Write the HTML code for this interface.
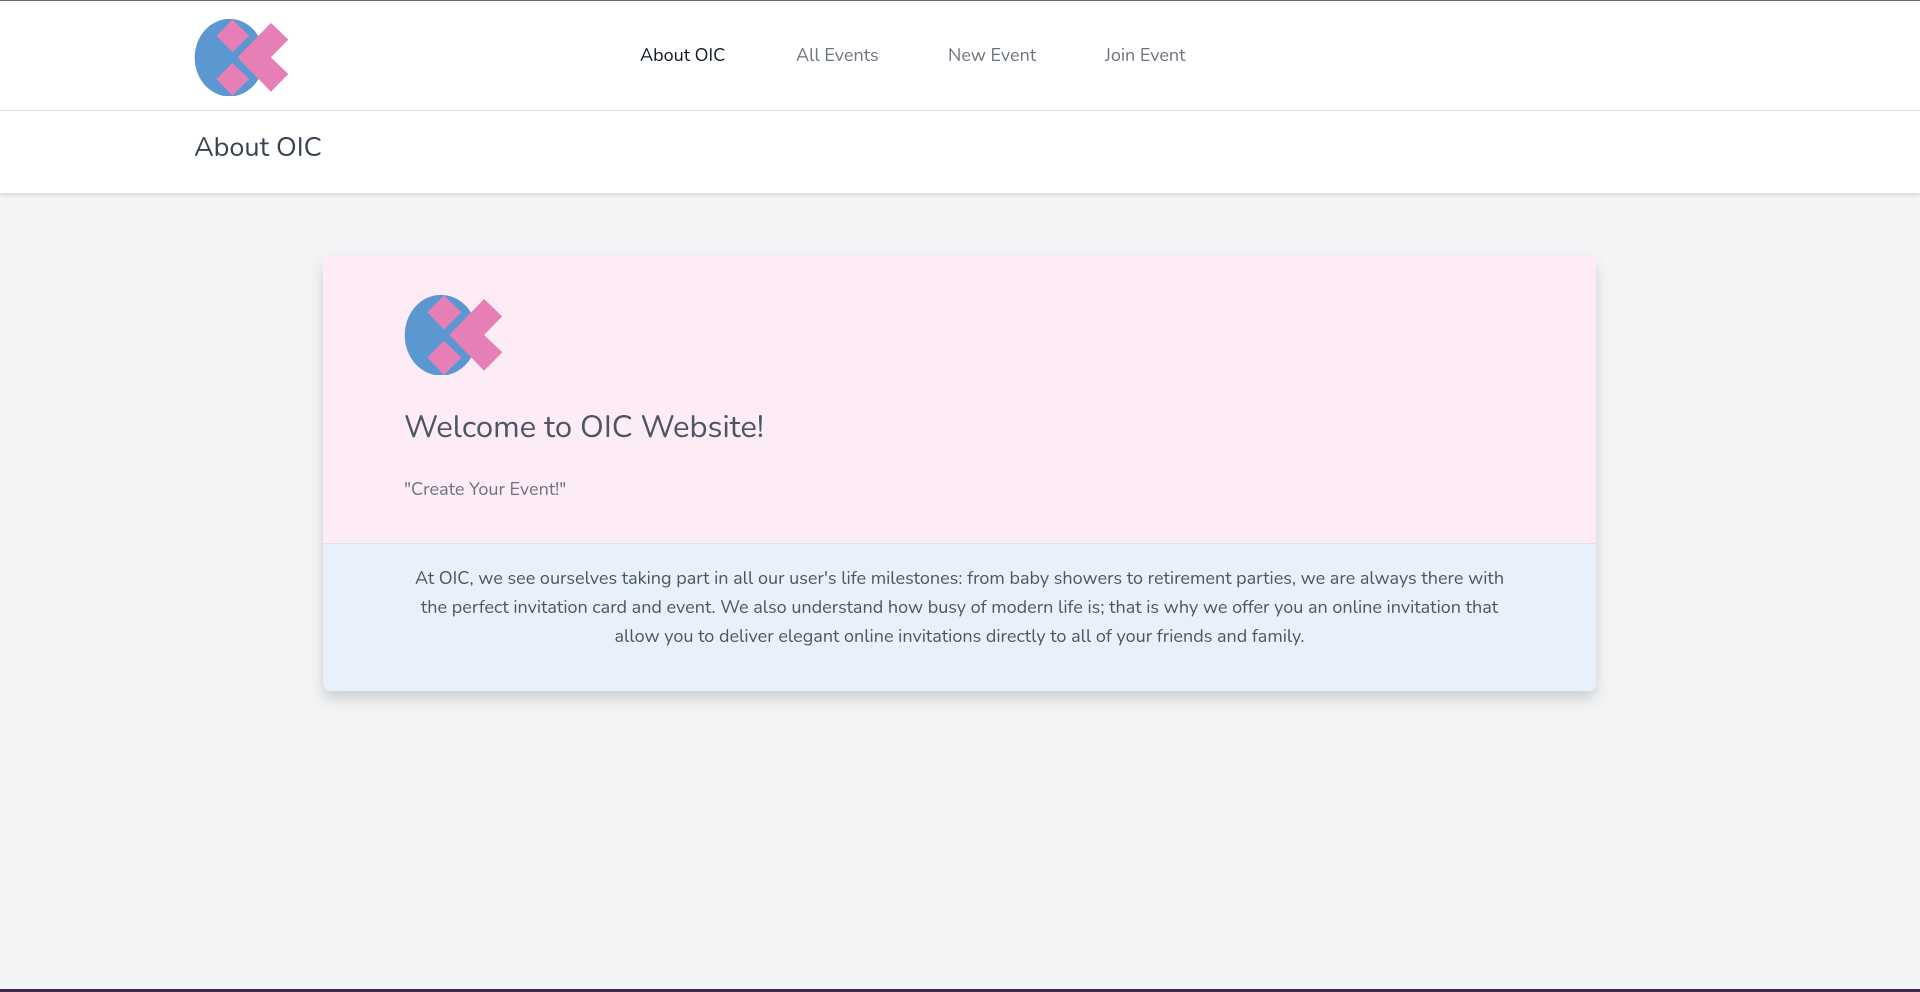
<!DOCTYPE html>
<html><head><meta charset="utf-8"><style>
*{margin:0;padding:0;box-sizing:border-box}
body{width:1920px;height:992px;background:#f3f4f6;font-family:"Nunito","Liberation Sans",sans-serif;position:relative;overflow:hidden}
.top{position:absolute;left:0;top:0;width:1920px;height:111px;background:#fff;border-top:1px solid #6b6b6b;border-bottom:1px solid #e5e7eb}
.sub{position:absolute;left:0;top:111px;width:1920px;height:82px;background:#fff;box-shadow:0 2px 4px rgba(0,0,0,.12)}
.sub h2{position:absolute;left:194px;top:18px;font-size:27px;font-weight:400;color:#374151}
.nav a{position:absolute;top:43px;font-size:18px;color:#6b7280;text-decoration:none}
.card{position:absolute;left:323px;top:255px;width:1273px;height:436px;border-radius:8px;overflow:hidden;box-shadow:0 8px 14px rgba(0,0,0,.15)}
.pink{height:289px;background:#fdebf6;border-bottom:1px solid #dbe3ee;position:relative}
.blue{height:147px;background:#e8f1fb;text-align:center;padding:0 90px;padding-top:21px;font-size:18px;line-height:29px;color:#4b5563}
.pink h1{position:absolute;left:81px;top:151px;font-size:31px;font-weight:400;color:#4b5563}
.pink p{position:absolute;left:81px;top:223px;font-size:18px;color:#6b7280}
.bot{position:absolute;left:0;top:989px;width:1920px;height:3px;background:#3b2559}
</style></head><body>
<svg width="0" height="0" style="position:absolute"><defs><g id="logo">
<ellipse cx="146" cy="166" rx="104" ry="116" fill="#5b97d1"/>
<polygon points="155,52 205,100 155,150 107,100" fill="#e77fb7"/>
<polygon points="155,182 205,230 155,280 107,230" fill="#e77fb7"/>
<polygon points="170,165 270,62 322,112 270,165 322,215 270,268" fill="#e77fb7"/>
</g></defs></svg>
<div class="top">
<svg style="position:absolute;left:194px;top:16px" width="97" height="79" viewBox="40 45 290 235"><use href="#logo"/></svg>
<div class="nav">
<a style="left:640px;color:#111827">About OIC</a>
<a style="left:796px">All Events</a>
<a style="left:948px">New Event</a>
<a style="left:1105px">Join Event</a>
</div></div>
<div class="sub"><h2>About OIC</h2></div>
<div class="card">
<div class="pink">
<svg style="position:absolute;left:81px;top:38px" width="101" height="82" viewBox="40 45 290 235"><use href="#logo"/></svg>
<h1>Welcome to OIC Website!</h1>
<p>"Create Your Event!"</p>
</div>
<div class="blue">At OIC, we see ourselves taking part in all our user's life milestones: from baby showers to retirement parties, we are always there with the perfect invitation card and event. We also understand how busy of modern life is; that is why we offer you an online invitation that allow you to deliver elegant online invitations directly to all of your friends and family.</div>
</div>
<div class="bot"></div>
</body></html>
